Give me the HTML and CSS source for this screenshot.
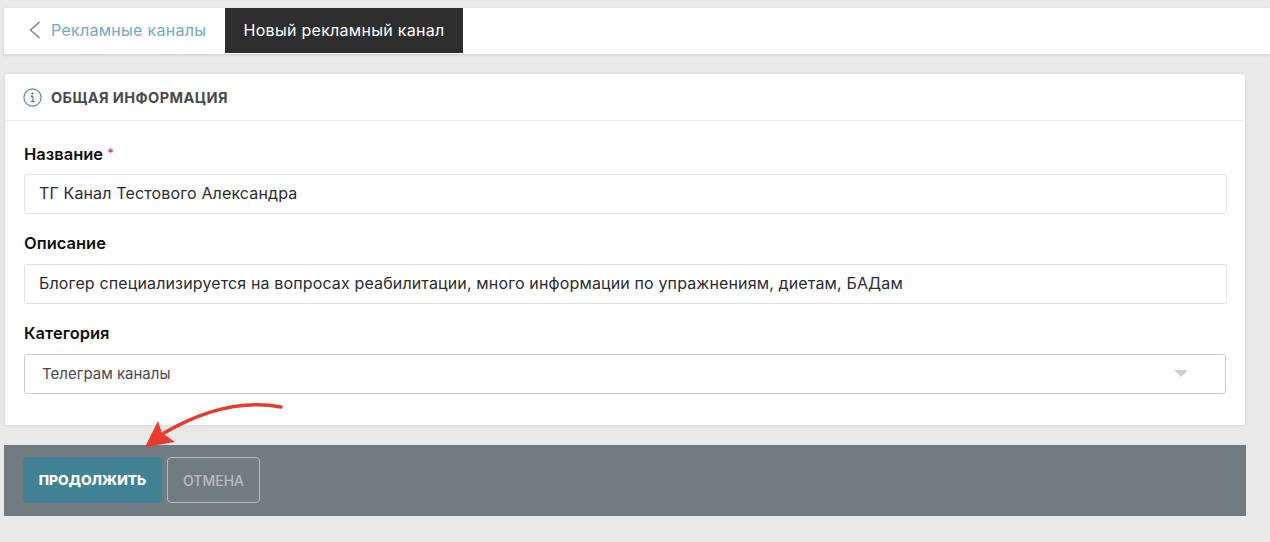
FILE: index.html
```html
<!DOCTYPE html>
<html lang="ru">
<head>
<meta charset="utf-8">
<title>Новый рекламный канал</title>
<link rel="stylesheet" href="styles.css">
</head>
<body>
<nav class="topbar">
  <a class="back">
    <svg class="chevron" width="14" height="20" viewBox="0 0 14 20"><path d="M11.5 2 L2.5 10 L11.5 18" fill="none" stroke="#777" stroke-width="1.3"/></svg>
    <span>Рекламные каналы</span>
  </a>
  <div class="tab">Новый рекламный канал</div>
</nav>
<section class="card">
  <header class="card-head">
    <svg width="19" height="19" viewBox="0 0 19 19"><circle cx="9.5" cy="9.5" r="8.6" fill="none" stroke="#4a8aa5" stroke-width="1.1"/><path d="M8 8.2h2v5.2M7.8 13.6h3.8M8 8.2h1" fill="none" stroke="#555" stroke-width="1"/><circle cx="9.4" cy="5.6" r="1" fill="#555"/></svg>
    <h2>ОБЩАЯ ИНФОРМАЦИЯ</h2>
  </header>
  <div class="card-body">
    <div class="field">
      <label>Название <span class="req">*</span></label>
      <div class="input">ТГ Канал Тестового Александра</div>
    </div>
    <div class="field">
      <label>Описание</label>
      <div class="input">Блогер специализируется на вопросах реабилитации, много информации по упражнениям, диетам, БАДам</div>
    </div>
    <div class="field">
      <label>Категория</label>
      <div class="select"><span>Телеграм каналы</span><i class="caret"></i></div>
    </div>
  </div>
</section>
<footer class="actions">
  <button class="btn primary">ПРОДОЛЖИТЬ</button>
  <button class="btn ghost">ОТМЕНА</button>
</footer>
<svg class="arrow" width="160" height="60" viewBox="0 0 160 60">
  <path d="M137 9 C110 4 70 6 20 35" fill="none" stroke="#e63b2e" stroke-width="3.400" stroke-linecap="round"/>
  <path d="M14 23 L1 49 L31 44 L18 35 Z" fill="#e63b2e"/>
</svg>
</body>
</html>
```
FILE: styles.css
```css
* { box-sizing: border-box; }
html, body { margin: 0; height: 542px; overflow: hidden; }
body {
  background: #e9e9e9;
  font-family: Inter, "Open Sans", "Liberation Sans", sans-serif;
  color: #222;
  padding: 8px 0 0 4px;
  position: relative;
}
.topbar {
  display: flex;
  height: 46px;
  background: #fff;
  padding-bottom: 1px;
  box-shadow: 0 1px 3px rgba(0,0,0,.14);
}
.back {
  width: 221px;
  display: flex;
  align-items: center;
  padding-left: 24px;
  padding-bottom: 2px;
  gap: 9px;
  color: #72a8c8;
  font-size: 16px;
  letter-spacing: .28px;
}
.tab {
  width: 238px;
  background: #2e2e2e;
  color: #fff;
  font-size: 16px;
  letter-spacing: .28px;
  padding-bottom: 2px;
  display: flex;
  align-items: center;
  justify-content: center;
}
.card {
  width: 1240px;
  height: 351px;
  margin: 20px 0 0 1px;
  background: #fff;
  border-radius: 2px;
  box-shadow: 0 0 3px rgba(0,0,0,.14);
}
.card-head {
  height: 47px;
  display: flex;
  align-items: center;
  gap: 9px;
  padding-left: 18px;
  border-bottom: 1px solid #ececec;
}
.card-head h2 {
  margin: 0;
  font-size: 14.500px;
  font-weight: 700;
  color: #4a4a4a;
  letter-spacing: .45px;
}
.card-body { padding: 23px 18px 0 19px; }
.field { margin-bottom: 20px; }
.field label {
  display: block;
  height: 21px;
  line-height: 19px;
  margin-bottom: 9px;
  font-size: 16.500px;
  font-weight: 600;
  color: #111;
}
.req {
  color: #a8475f;
  font-size: 13px;
  font-weight: 400;
  vertical-align: 2px;
}
.input {
  height: 40px;
  line-height: 36px;
  padding-left: 14px;
  width: 1203px;
  border: 1px solid #e3e3e3;
  border-radius: 2px;
  font-size: 16px;
  letter-spacing: .14px;
  color: #2b2b33;
}
.select {
  height: 40px;
  width: 1202px;
  border: 1px solid #cbcbcb;
  border-radius: 3px;
  padding: 0 37px 1px 17px;
  display: flex;
  align-items: center;
  justify-content: space-between;
  font-size: 15px;
  color: #4b4650;
}
.caret {
  width: 0; height: 0;
  border-left: 7px solid transparent;
  border-right: 7px solid transparent;
  border-top: 7px solid #cfcfcf;
}
.actions {
  width: 1242px;
  height: 71px;
  margin-top: 20px;
  background: #717c80;
  padding: 12px 0 0 19px;
  display: flex;
  gap: 5px;
  align-items: flex-start;
}
.btn {
  height: 46px;
  border-radius: 4px;
  font-family: inherit;
  font-size: 14px;
  padding: 0;
}
.primary {
  width: 139px;
  background: #418394;
  border: 0;
  color: #fff;
  font-size: 13.750px;
  font-weight: 800;
}
.ghost {
  width: 93px;
  background: transparent;
  border: 1px solid #b5babd;
  color: #b8bdc0;
  font-weight: 500;
}
.arrow { position: absolute; left: 144px; top: 398px; }
```
